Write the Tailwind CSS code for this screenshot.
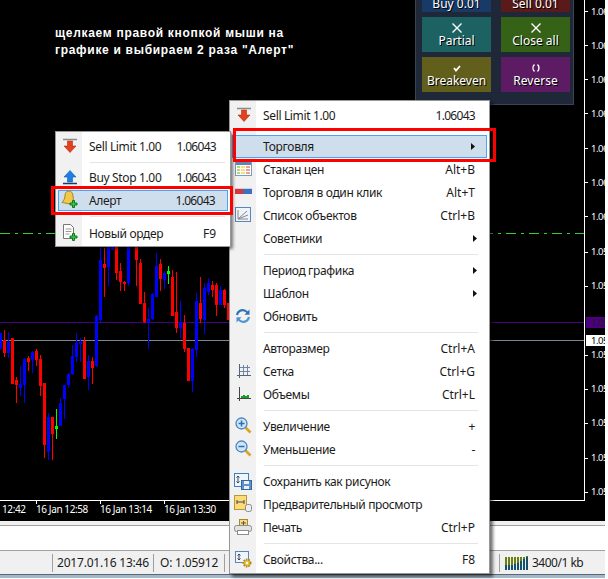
<!DOCTYPE html>
<html>
<head>
<meta charset="utf-8">
<script src="https://cdn.jsdelivr.net/npm/@tailwindcss/browser@4"></script>
</head>
<body class="bg-white">
<div class="relative w-[605px] h-[579px] overflow-hidden font-['Noto_Sans',sans-serif] text-[12px] text-[#1b1b1b]">

  <!-- chart -->
  <div class="relative h-[521px] bg-black overflow-hidden">
    <div class="absolute left-0 top-[322px] w-[584px] h-px bg-[#4b0082]"></div>
    <div class="absolute left-0 top-[340px] w-[584px] h-px bg-[#778899]"></div>
    <svg class="absolute left-0 top-[233px]" width="584" height="1"><line x1="0" y1="0.5" x2="584" y2="0.5" stroke="#32cd32" stroke-dasharray="10 5 3 5"/></svg>
    <svg class="absolute left-0 top-[240px]" width="230" height="230" viewBox="0 0 690 690" shape-rendering="crispEdges" fill="none">
      <g transform="translate(0.5 0)">
        <path stroke="#0000ff" stroke-width="3" d="M1 280V330M25 277V355M61 378V467M73 355V490M97 334V400M145 519V660M181 474V558M193 435V537M205 400V443M217 315V405M229 280V365M241 295V365M265 345V450M289 225V380M301 25V250M325 20V137M337 20V30M385 20V137M445 205V328M457 160V240M469 40V170M493 92V147M541 184V293M577 325V455M589 160V350M613 130V282M625 114V165M661 138V195"/>
        <path stroke="#0000ff" stroke-width="9" d="M1 280V325M25 305V340M61 432V444M73 358V435M97 336V360M145 531V636M181 489V558M193 435V477M205 402V435M217 348V402M229 310V352M241 305V312M265 362V412M289 228V378M301 60V240M325 20V82M337 20V30M385 20V130M445 237V246M457 162V236M469 78V170M493 100V120M541 246V264M577 327V423M589 183V330M613 144V240M625 128V155M661 150V195"/>
        <path stroke="#ff0000" stroke-width="3" d="M13 270V350M37 295V432M49 412V490M85 348V393M109 327V378M121 345V468M133 430V654M157 531V660M253 292V418M277 352V432M313 25V170M349 20V120M361 70V152M373 122V152M409 20V137M421 57V192M433 155V250M481 58V152M517 90V228M529 97V278M553 225V335M565 324V423M601 112V250M637 124V170M649 130V228M673 147V205M685 192V240"/>
        <path stroke="#ff0000" stroke-width="9" d="M13 300V340M37 295V432M49 420V435M85 354V366M109 334V360M121 358V438M133 430V615M157 531V582M253 303V417M277 363V384M313 72V84M349 20V98M361 94V125M373 125V132M409 20V60M421 70V192M433 190V246M481 72V117M517 112V228M529 216V264M553 250V326M565 324V423M601 188V238M637 135V150M649 135V195M673 150V195M685 190V240"/>
        <path stroke="#00ff00" stroke-width="3" d="M505 78V132M169 507V597"/>
        <path stroke="#00ff00" stroke-width="9" d="M501 97.5H510M165 561H174"/>
      </g>
    </svg>

    <!-- frame and axes -->
    <div class="absolute left-0 top-0 w-[585px] h-[501px] border-r border-b border-white"></div>
    <div class="absolute left-[36px] top-[500px] w-px h-[4px] bg-white"></div>
    <div class="absolute left-[100px] top-[500px] w-px h-[4px] bg-white"></div>
    <div class="absolute left-[164px] top-[500px] w-px h-[4px] bg-white"></div>
    <div class="absolute left-0 top-[502px] w-[230px] h-[14px] text-[10px] tracking-[-0.4px] leading-[14px] text-white">
      <span class="absolute left-[2px]">12:42</span>
      <span class="absolute left-[36px] whitespace-nowrap">16 Jan 12:58</span>
      <span class="absolute left-[100px] whitespace-nowrap">16 Jan 13:14</span>
      <span class="absolute left-[164px] whitespace-nowrap">16 Jan 13:30</span>
    </div>
    <div class="absolute left-[585px] top-0 w-[20px] h-[500px] text-[9.5px] tracking-[-0.5px] leading-[12px] text-white">
      <div class="absolute left-0 top-[11px] w-[3px] h-px bg-white"></div><span class="absolute left-[6px] top-[6px]">1.06</span>
      <div class="absolute left-0 top-[45px] w-[3px] h-px bg-white"></div><span class="absolute left-[6px] top-[40px]">1.06</span>
      <div class="absolute left-0 top-[79px] w-[3px] h-px bg-white"></div><span class="absolute left-[6px] top-[74px]">1.06</span>
      <div class="absolute left-0 top-[113px] w-[3px] h-px bg-white"></div><span class="absolute left-[6px] top-[108px]">1.06</span>
      <div class="absolute left-0 top-[148px] w-[3px] h-px bg-white"></div><span class="absolute left-[6px] top-[143px]">1.06</span>
      <div class="absolute left-0 top-[182px] w-[3px] h-px bg-white"></div><span class="absolute left-[6px] top-[177px]">1.06</span>
      <div class="absolute left-0 top-[216px] w-[3px] h-px bg-white"></div><span class="absolute left-[6px] top-[211px]">1.06</span>
      <div class="absolute left-0 top-[252px] w-[3px] h-px bg-white"></div><span class="absolute left-[6px] top-[246px]">1.05</span>
      <div class="absolute left-0 top-[286px] w-[3px] h-px bg-white"></div><span class="absolute left-[6px] top-[280px]">1.05</span>
      <div class="absolute left-[1px] top-[317px] w-[19px] h-[11px] bg-[#4b0082] pl-[5px] leading-[11px] text-[#1d1d1d]">1.05</div>
      <div class="absolute left-[1px] top-[335px] w-[19px] h-[11px] bg-white pl-[5px] leading-[11px] text-black">1.05</div>
      <div class="absolute left-0 top-[355px] w-[3px] h-px bg-white"></div><span class="absolute left-[6px] top-[349px]">1.05</span>
      <div class="absolute left-0 top-[389px] w-[3px] h-px bg-white"></div><span class="absolute left-[6px] top-[383px]">1.05</span>
      <div class="absolute left-0 top-[423px] w-[3px] h-px bg-white"></div><span class="absolute left-[6px] top-[417px]">1.05</span>
      <div class="absolute left-0 top-[458px] w-[3px] h-px bg-white"></div><span class="absolute left-[6px] top-[452px]">1.05</span>
      <div class="absolute left-0 top-[492px] w-[3px] h-px bg-white"></div><span class="absolute left-[6px] top-[486px]">1.05</span>
    </div>

    <!-- annotation -->
    <div class="absolute left-[55px] top-[25px] font-['Liberation_Sans',sans-serif] text-[12px] leading-[17px] font-bold tracking-[0.7px] text-white whitespace-nowrap">щелкаем правой кнопкой мыши на<br>графике и выбираем 2 раза "Алерт"</div>

    <!-- trade panel -->
    <div class="absolute left-[415px] top-[-30px] w-[159px] h-[135px] bg-[#1e2838] border border-[#3a4454] px-[6px] pt-[6px] grid grid-cols-[69px_69px] gap-x-[10px] gap-y-[5px] content-start text-[12px] leading-[15px] text-white [text-shadow:1px_1px_0_#000] text-center">
      <div class="h-[35px] bg-[#173a66] flex flex-col items-center justify-end pb-[1px]">Buy 0.01</div>
      <div class="h-[35px] bg-[#5a1a1a] flex flex-col items-center justify-end pb-[1px]">Sell 0.01</div>
      <div class="h-[35px] bg-[#1d6262] flex flex-col items-center pt-[6px]"><svg width="10" height="10" viewBox="0 0 10 10"><path d="M0.5 0.5L9.5 9.5M9.5 0.5L0.5 9.5" stroke="#fff" stroke-width="1.4"/></svg><span>Partial</span></div>
      <div class="h-[35px] bg-[#366218] flex flex-col items-center pt-[6px]"><svg width="10" height="10" viewBox="0 0 10 10"><path d="M0.5 0.5L9.5 9.5M9.5 0.5L0.5 9.5" stroke="#fff" stroke-width="1.4"/></svg><span>Close all</span></div>
      <div class="h-[35px] bg-[#625e1c] flex flex-col items-center pt-[6px]"><svg width="10" height="10" viewBox="0 0 10 10"><path d="M2 5L4 7.5L8 3" stroke="#fff" stroke-width="1.8" fill="none"/></svg><span>Breakeven</span></div>
      <div class="h-[35px] bg-[#5c1b62] flex flex-col items-center pt-[6px]"><svg width="10" height="10" viewBox="0 0 10 10"><path d="M3.5 1.5C1.5 3.5 1.5 6.5 3.5 8.5M6.5 1.5C8.5 3.5 8.5 6.5 6.5 8.5" stroke="#fff" stroke-width="1.4" fill="none"/></svg><span>Reverse</span></div>
    </div>
  </div>

  <!-- lower bands -->
  <div class="h-[5px] bg-[#f0f0f0] border-b border-[#a0a0a0]"></div>
  <div class="h-[25px] bg-white border-b border-[#a0a0a0]"></div>
  <div class="h-[23px] bg-[#f0f0f0] flex items-center text-[12px] tracking-[-0.2px]">
    <div class="w-[52px] shrink-0"></div>
    <div class="w-[101px] shrink-0 h-[18px] border-l border-[#a0a0a0] pl-[4px] leading-[18px] whitespace-nowrap">2017.01.16 13:46</div>
    <div class="w-[71px] shrink-0 h-[18px] border-l border-[#a0a0a0] pl-[6px] leading-[18px] whitespace-nowrap">O: 1.05912</div>
    <div class="w-[275px] shrink-0 h-[18px] border-l border-[#a0a0a0]"></div>
    <div class="h-[18px] border-l border-[#a0a0a0] pl-[5px] flex items-center gap-[4px] leading-[18px] tracking-[-0.5px] whitespace-nowrap">
      <svg width="23" height="14" viewBox="0 0 23 14" shape-rendering="crispEdges"><path fill="#6b7f10" d="M0 1h1.500v8h-1.500zM3 1h1.500v8h-1.500zM6 1h1.500v8h-1.500zM9 1h1.500v7h-1.500zM12 1h1.500v6h-1.500zM15 1h1.500v4h-1.500zM18 1h1.500v2h-1.500zM21 0h2v1h-2z"/><path fill="#12506e" d="M0 9h2v5h-2zM3 9h2v5h-2zM6 9h2v5h-2zM9 8h2v6h-2zM12 7h2v7h-2zM15 5h2v9h-2zM18 3h2v11h-2zM21 1h2v13h-2z"/></svg>
      <span>3400/1 kb</span>
    </div>
  </div>
  <div class="h-[4px] border-t border-[#5c6670] bg-[#a3b8cc]"></div>

  <!-- main context menu -->
  <div class="absolute left-[229px] top-[100px] w-[261px] h-[474px] bg-white border border-[#979797] shadow-[3px_3px_3px_rgba(0,0,0,0.55)] pt-[3px] pb-[2px] px-px tracking-[-0.35px]">
    <div class="absolute left-0 top-0 bottom-0 w-[26px] bg-[#f1f1f1]"></div>
    <div class="relative flex flex-col">
      <div class="flex items-center h-[23px] pl-[32px] pr-[13px]">
        <span class="flex-1">Sell Limit 1.00</span><span class="tracking-[-0.7px]">1.06043</span>
        <svg class="absolute left-[4px] top-[3px]" width="18" height="16" viewBox="0 0 18 16"><path d="M2 1.500H16" stroke="#8a8a8a" stroke-width="1.500"/><path d="M6.500 3H11.500V8H15L9 14.500L3 8H6.500Z" fill="#e2411f" stroke="#b3300f" stroke-width="0.600"/></svg>
      </div>
      <div class="h-[8px] flex items-center pl-[33px] pr-[10px]"></div>
      <div class="flex items-center h-[23px] pl-[31px] pr-[11px] bg-[#cfdeec] border border-[#4aa3f5] ml-px mr-[1px]">
        <span class="flex-1 -ml-[1px]">Торговля</span>
        <svg width="4" height="7" viewBox="0 0 4 7"><path d="M0 0L4 3.500L0 7Z" fill="#111"/></svg>
      </div>
      <div class="flex items-center h-[23px] pl-[32px] pr-[13px] relative">
        <span class="flex-1">Стакан цен</span><span class="tracking-normal">Alt+B</span>
        <svg class="absolute left-[4px] top-[3px]" width="17" height="15" viewBox="0 0 17 15"><rect x="0.500" y="0.500" width="16" height="14" fill="#fff" stroke="#7a9cc0"/><rect x="1" y="1" width="15" height="3" fill="#5f86b5"/><path fill="#b8d878" d="M2 5h3v2h-3zM2 8h3v2h-3zM2 11h3v2h-3z"/><path fill="#f3e27a" d="M6 5h4v2h-4zM6 8h4v2h-4zM6 11h4v2h-4z"/><path fill="#f0a090" d="M11 5h4v2h-4zM11 8h4v2h-4zM11 11h4v2h-4z"/></svg>
      </div>
      <div class="flex items-center h-[23px] pl-[32px] pr-[13px] relative">
        <span class="flex-1">Торговля в один клик</span><span class="tracking-normal">Alt+T</span>
        <svg class="absolute left-[4px] top-[6px]" width="17" height="9" viewBox="0 0 17 9"><rect x="0" y="2" width="8" height="5" fill="#d9363a"/><rect x="8" y="2" width="9" height="5" fill="#3f6fbf"/><rect x="0" y="1" width="17" height="1" fill="#c8d2de"/></svg>
      </div>
      <div class="flex items-center h-[23px] pl-[32px] pr-[13px] relative">
        <span class="flex-1">Список объектов</span><span class="tracking-normal">Ctrl+B</span>
        <svg class="absolute left-[4px] top-[3px]" width="16" height="15" viewBox="0 0 16 15"><rect x="0.500" y="0.500" width="15" height="14" fill="#eef4fb" stroke="#5a86b8"/><path d="M3 12L12 4M3 12L13 8M3 3V12H13" stroke="#888" fill="none"/></svg>
      </div>
      <div class="flex items-center h-[23px] pl-[32px] pr-[11px]">
        <span class="flex-1">Советники</span>
        <svg width="4" height="7" viewBox="0 0 4 7"><path d="M0 0L4 3.500L0 7Z" fill="#111"/></svg>
      </div>
      <div class="h-[9px] flex items-center pl-[33px] pr-[10px]"><div class="h-px w-full bg-[#e4e4e4]"></div></div>
      <div class="flex items-center h-[23px] pl-[32px] pr-[11px]">
        <span class="flex-1">Период графика</span>
        <svg width="4" height="7" viewBox="0 0 4 7"><path d="M0 0L4 3.500L0 7Z" fill="#111"/></svg>
      </div>
      <div class="flex items-center h-[23px] pl-[32px] pr-[11px]">
        <span class="flex-1">Шаблон</span>
        <svg width="4" height="7" viewBox="0 0 4 7"><path d="M0 0L4 3.500L0 7Z" fill="#111"/></svg>
      </div>
      <div class="flex items-center h-[23px] pl-[32px] pr-[13px] relative">
        <span class="flex-1">Обновить</span>
        <svg class="absolute left-[4px] top-[3px]" width="16" height="16" viewBox="0 0 16 16" fill="none"><path d="M2 7C2.500 3.500 6 1.500 9.500 2.500C11 3 12 3.800 12.800 5" stroke="#2d72b8" stroke-width="2.200"/><path d="M14.500 1.500V6.800H9.500Z" fill="#2d72b8"/><path d="M14 9C13.500 12.500 10 14.500 6.500 13.500C5 13 4 12.200 3.200 11" stroke="#4f93d0" stroke-width="2.200"/><path d="M1.500 14.500V9.200H6.500Z" fill="#4f93d0"/></svg>
      </div>
      <div class="h-[9px] flex items-center pl-[33px] pr-[10px]"><div class="h-px w-full bg-[#e4e4e4]"></div></div>
      <div class="flex items-center h-[23px] pl-[32px] pr-[13px]">
        <span class="flex-1">Авторазмер</span><span class="tracking-normal">Ctrl+A</span>
      </div>
      <div class="flex items-center h-[23px] pl-[32px] pr-[13px] relative">
        <span class="flex-1">Сетка</span><span class="tracking-normal">Ctrl+G</span>
        <svg class="absolute left-[6px] top-[4px]" width="14" height="14" viewBox="0 0 14 14" stroke="#55617a" fill="none" shape-rendering="crispEdges"><path d="M2.500 0V14M0 11.500H14"/><path d="M6.500 1V11M10.500 1V11M3 3.500H13M3 7.500H13" stroke="#6f86a8"/></svg>
      </div>
      <div class="flex items-center h-[23px] pl-[32px] pr-[13px] relative">
        <span class="flex-1">Объемы</span><span class="tracking-normal">Ctrl+L</span>
        <svg class="absolute left-[6px] top-[4px]" width="14" height="14" viewBox="0 0 14 14" shape-rendering="crispEdges"><path d="M2.500 0V14M0 11.500H14" stroke="#444" fill="none"/><path d="M4 11V9H6V8H8V9H10V8H12V11Z" fill="#16a02a"/></svg>
      </div>
      <div class="h-[9px] flex items-center pl-[33px] pr-[10px]"><div class="h-px w-full bg-[#e4e4e4]"></div></div>
      <div class="flex items-center h-[23px] pl-[32px] pr-[13px] relative">
        <span class="flex-1">Увеличение</span><span>+</span>
        <svg class="absolute left-[4px] top-[2px]" width="17" height="17" viewBox="0 0 17 17" fill="none"><path d="M10 10L15.500 15.500" stroke="#d9a520" stroke-width="2.600"/><circle cx="6.500" cy="6.500" r="5.500" fill="#cfe4f7" stroke="#4d86bd" stroke-width="1.300"/><path d="M3.500 6.500H9.500M6.500 3.500V9.500" stroke="#2f6fb0" stroke-width="1.500"/></svg>
      </div>
      <div class="flex items-center h-[23px] pl-[32px] pr-[13px] relative">
        <span class="flex-1">Уменьшение</span><span>-</span>
        <svg class="absolute left-[4px] top-[2px]" width="17" height="17" viewBox="0 0 17 17" fill="none"><path d="M10 10L15.500 15.500" stroke="#d9a520" stroke-width="2.600"/><circle cx="6.500" cy="6.500" r="5.500" fill="#cfe4f7" stroke="#4d86bd" stroke-width="1.300"/><path d="M3.500 6.500H9.500" stroke="#2f6fb0" stroke-width="1.500"/></svg>
      </div>
      <div class="h-[9px] flex items-center pl-[33px] pr-[10px]"><div class="h-px w-full bg-[#e4e4e4]"></div></div>
      <div class="flex items-center h-[23px] pl-[32px] pr-[13px] relative">
        <span class="flex-1">Сохранить как рисунок</span>
        <svg class="absolute left-[3px] top-[3px]" width="18" height="17" viewBox="0 0 18 17"><rect x="0.500" y="0.500" width="14" height="13" fill="#eef5fc" stroke="#3f7fc0"/><path d="M4 3V10M2.500 4.500L4 3L5.500 4.500M2.500 8.500L4 10L5.500 8.500" stroke="#445" fill="none"/><rect x="7.500" y="7.500" width="10" height="9" fill="#5e93c9" stroke="#34689c"/><rect x="10" y="8" width="5" height="3" fill="#e8f0f8"/><rect x="10" y="13" width="5" height="3" fill="#e8f0f8"/></svg>
      </div>
      <div class="flex items-center h-[23px] pl-[32px] pr-[13px] relative">
        <span class="flex-1">Предварительный просмотр</span>
        <svg class="absolute left-[3px] top-[2px]" width="18" height="18" viewBox="0 0 18 18"><rect x="0.500" y="0.500" width="12" height="14" fill="#fbdc78" stroke="#b89a30"/><path d="M3 7H10M3 5V9M10 5V9" stroke="#445" fill="none"/><rect x="11.500" y="9.500" width="6" height="7" rx="2" fill="#eee" stroke="#8a8a8a"/></svg>
      </div>
      <div class="flex items-center h-[23px] pl-[32px] pr-[13px] relative">
        <span class="flex-1">Печать</span><span class="tracking-normal">Ctrl+P</span>
        <svg class="absolute left-[3px] top-[3px]" width="18" height="17" viewBox="0 0 18 17"><rect x="5.500" y="0.500" width="8" height="8" fill="#fbdc78" stroke="#a68a2a"/><path d="M7 4H12M9.500 2V6" stroke="#555" fill="none"/><rect x="0.500" y="6.500" width="17" height="6" rx="2" fill="#e2e2e2" stroke="#8c8c8c"/><rect x="3.500" y="11.500" width="11" height="4" fill="#fff" stroke="#8c8c8c"/></svg>
      </div>
      <div class="h-[9px] flex items-center pl-[33px] pr-[10px]"><div class="h-px w-full bg-[#e4e4e4]"></div></div>
      <div class="flex items-center h-[23px] pl-[32px] pr-[13px] relative">
        <span class="flex-1">Свойства...</span><span class="tracking-normal">F8</span>
        <svg class="absolute left-[4px] top-[3px]" width="17" height="17" viewBox="0 0 17 17"><rect x="0.500" y="0.500" width="13" height="11" fill="#eef5fc" stroke="#5a86b8"/><path d="M4 3V9M2.500 4.500L4 3L5.500 4.500M2.500 7.500L4 9L5.500 7.500" stroke="#445" fill="none"/><circle cx="12" cy="12" r="3.500" fill="#e8c040" stroke="#b08a18" stroke-width="2" stroke-dasharray="1.500 1"/><circle cx="12" cy="12" r="1.200" fill="#fff"/></svg>
      </div>
    </div>
  </div>

  <!-- left popup -->
  <div class="absolute left-[55px] top-[131px] w-[176px] h-[116px] bg-white border border-[#979797] shadow-[2px_2px_3px_rgba(0,0,0,0.5)] pt-[3px] px-px tracking-[-0.35px]">
    <div class="absolute left-0 top-0 bottom-0 w-[26px] bg-[#f1f1f1]"></div>
    <div class="relative flex flex-col">
      <div class="relative flex items-center h-[23px] pl-[32px] pr-[13px]">
        <span class="flex-1">Sell Limit 1.00</span><span class="tracking-[-0.7px]">1.06043</span>
        <svg class="absolute left-[4px] top-[3px]" width="18" height="16" viewBox="0 0 18 16"><path d="M2 1.500H16" stroke="#8a8a8a" stroke-width="1.500"/><path d="M6.500 3H11.500V8H15L9 14.500L3 8H6.500Z" fill="#e2411f" stroke="#b3300f" stroke-width="0.600"/></svg>
      </div>
      <div class="h-[8px] flex items-center pl-[33px] pr-[4px]"><div class="h-px w-full bg-[#e4e4e4]"></div></div>
      <div class="relative flex items-center h-[23px] pl-[32px] pr-[13px]">
        <span class="flex-1">Buy Stop 1.00</span><span class="tracking-[-0.7px]">1.06043</span>
        <svg class="absolute left-[4px] top-[3px]" width="18" height="16" viewBox="0 0 18 16"><path d="M6.500 13H11.500V8H15L9 1.500L3 8H6.500Z" fill="#1e7fe0" stroke="#1460b0" stroke-width="0.600"/><path d="M2 14.500H16" stroke="#1a3a66" stroke-width="1.500"/></svg>
      </div>
      <div class="relative flex items-center h-[21px] mt-px pl-[30px] pr-[12px] bg-[#cfdeec] border border-[#4aa3f5] ml-px mr-[1px]">
        <span class="flex-1">Алерт</span><span class="tracking-[-0.7px]">1.06043</span>
        <svg class="absolute left-[2px] top-[-1px]" width="19" height="19" viewBox="0 0 19 19"><path d="M8 1C5 1 4 3 4 6C4 9 2 11 1 12.500L12 14.500C12.500 12 12.500 9 12 6C11.700 3 10.500 1 8 1Z" fill="#f0c84a" stroke="#a8862a"/><path d="M11.500 10.500H13.500V13H16V15H13.500V17.500H11.500V15H9V13H11.500Z" fill="#3cc24a" stroke="#0c7a1c"/></svg>
      </div>
      <div class="h-[11px] flex items-center pl-[33px] pr-[4px]"><div class="h-px w-full bg-[#e4e4e4]"></div></div>
      <div class="relative flex items-center h-[23px] pl-[32px] pr-[13px]">
        <span class="flex-1">Новый ордер</span><span class="tracking-normal">F9</span>
        <svg class="absolute left-[5px] top-[2px]" width="18" height="18" viewBox="0 0 18 18"><path d="M1.500 0.500H8.500L11.500 3.500V14.500H1.500Z" fill="#fff" stroke="#777"/><path d="M3.500 5H9.500M3.500 7.500H9.500M3.500 10H7.500" stroke="#999"/><path d="M10.500 9.500H12.500V12H15V14H12.500V16.500H10.500V14H8V12H10.500Z" fill="#3cc24a" stroke="#0c7a1c"/></svg>
      </div>
    </div>
  </div>

  <!-- red highlight frames -->
  <div class="absolute left-[233px] top-[128px] w-[263px] h-[34px] border-[3px] border-[#ff0000]"></div>
  <div class="absolute left-[51px] top-[186px] w-[182px] h-[29px] border-[3px] border-[#ff0000]"></div>
</div>
</body>
</html>
